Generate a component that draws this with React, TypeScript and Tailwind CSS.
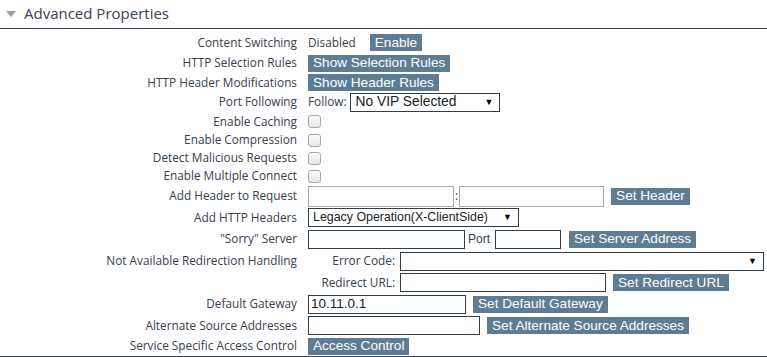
import React from 'react';

const labelFont = { fontFamily: '"Open Sans", "Noto Sans", sans-serif' };
const arial = { fontFamily: '"Liberation Sans", Arial, sans-serif' };

const Btn: React.FC<{ children: React.ReactNode; className?: string }> = ({ children, className = '' }) => (
  <span
    style={arial}
    className={`inline-flex items-center h-[17px] px-[5px] bg-[#5e7d95] text-white text-[13.6px] leading-none whitespace-nowrap ${className}`}
  >
    {children}
  </span>
);

const Check = () => (
  <span className="inline-block w-[13px] h-[13px] rounded-[3px] border border-[#a8a8a8] bg-gradient-to-b from-[#fcfcfc] to-[#e6e6e6]" />
);

const Select: React.FC<{ value?: string; className?: string }> = ({ value = '', className = '' }) => (
  <span
    style={arial}
    className={`flex items-center justify-between h-[19px] border border-[#2f3d4c] bg-white pl-[4px] pr-[6px] text-[#222] leading-none ${className}`}
  >
    <span className="whitespace-nowrap">{value}</span>
    <span className="text-[9px] text-black">▼</span>
  </span>
);

const Input: React.FC<{ value?: string; className?: string; gray?: boolean }> = ({ value = '', className = '', gray }) => (
  <span
    style={arial}
    className={`flex items-center h-[19px] border bg-white pl-[2px] text-[13.5px] text-[#222] leading-none ${gray ? 'border-[#aaaaaa]' : 'border-[#2f3d4c]'} ${className}`}
  >
    {value}
  </span>
);

const Row: React.FC<{ label: string; h: string; children?: React.ReactNode }> = ({ label, h, children }) => (
  <div className={`flex items-center ${h}`}>
    <div className="w-[297px] shrink-0 text-right text-[11.8px] text-[#37404c] whitespace-nowrap" style={labelFont}>
      {label}
    </div>
    <div className="flex items-center pl-[11px] text-[11.8px] text-[#37404c]" style={labelFont}>
      {children}
    </div>
  </div>
);

export default function App() {
  return (
    <div className="w-[767px] h-[357px] bg-white overflow-hidden">
      <div className="flex items-center h-[29px] pb-[2px] border-b border-[#3a4452]">
        <svg width="10" height="6" viewBox="0 0 10 6" className="ml-[6px] mt-[1px]">
          <polygon points="0,0 10,0 5,6" fill="#a0a0a0" />
        </svg>
        <span className="ml-[8px] text-[15px] text-[#3a4350]" style={labelFont}>Advanced Properties</span>
      </div>
      <div className="pt-[3px]">
        <Row label="Content Switching" h="h-[21px]">
          <span>Disabled</span>
          <Btn className="ml-[14px]">Enable</Btn>
        </Row>
        <Row label="HTTP Selection Rules" h="h-[20px]">
          <Btn>Show Selection Rules</Btn>
        </Row>
        <Row label="HTTP Header Modifications" h="h-[19px]">
          <Btn>Show Header Rules</Btn>
        </Row>
        <Row label="Port Following" h="h-[20px]">
          <span>Follow:</span>
          <Select value="No VIP Selected" className="ml-[4px] w-[150px] text-[13.8px]" />
        </Row>
        <Row label="Enable Caching" h="h-[19px]">
          <Check />
        </Row>
        <Row label="Enable Compression" h="h-[18px]">
          <Check />
        </Row>
        <Row label="Detect Malicious Requests" h="h-[18px]">
          <Check />
        </Row>
        <Row label="Enable Multiple Connect" h="h-[18px]">
          <Check />
        </Row>
        <Row label="Add Header to Request" h="h-[22px]">
          <Input gray className="w-[146px] h-[21px]" />
          <span className="mx-[1px]">:</span>
          <Input gray className="w-[145px] h-[21px]" />
          <Btn className="ml-[7px]">Set Header</Btn>
        </Row>
        <Row label="Add HTTP Headers" h="h-[21px]">
          <Select value="Legacy Operation(X-ClientSide)" className="w-[211px] text-[12.4px]" />
        </Row>
        <Row label="&quot;Sorry&quot; Server" h="h-[22px]">
          <Input className="w-[157px]" />
          <span className="ml-[3px] text-[12px]" style={arial}>Port</span>
          <Input className="ml-[5px] w-[66px]" />
          <Btn className="ml-[8px]">Set Server Address</Btn>
        </Row>
        <Row label="Not Available Redirection Handling" h="h-[22px]">
          <span className="w-[87px] text-right">Error Code:</span>
          <Select className="ml-[5px] w-[364px]" />
        </Row>
        <Row label="" h="h-[21px]">
          <span className="w-[87px] text-right">Redirect URL:</span>
          <Input className="ml-[5px] w-[206px]" />
          <Btn className="ml-[7px]">Set Redirect URL</Btn>
        </Row>
        <Row label="Default Gateway" h="h-[22px]">
          <Input value="10.11.0.1" className="w-[158px]" />
          <Btn className="ml-[7px]">Set Default Gateway</Btn>
        </Row>
        <Row label="Alternate Source Addresses" h="h-[21px]">
          <Input className="w-[172px]" />
          <Btn className="ml-[7px]">Set Alternate Source Addresses</Btn>
        </Row>
        <Row label="Service Specific Access Control" h="h-[20px]">
          <Btn>Access Control</Btn>
        </Row>
      </div>
      <div className="border-t border-[#3a4452]" />
    </div>
  );
}
